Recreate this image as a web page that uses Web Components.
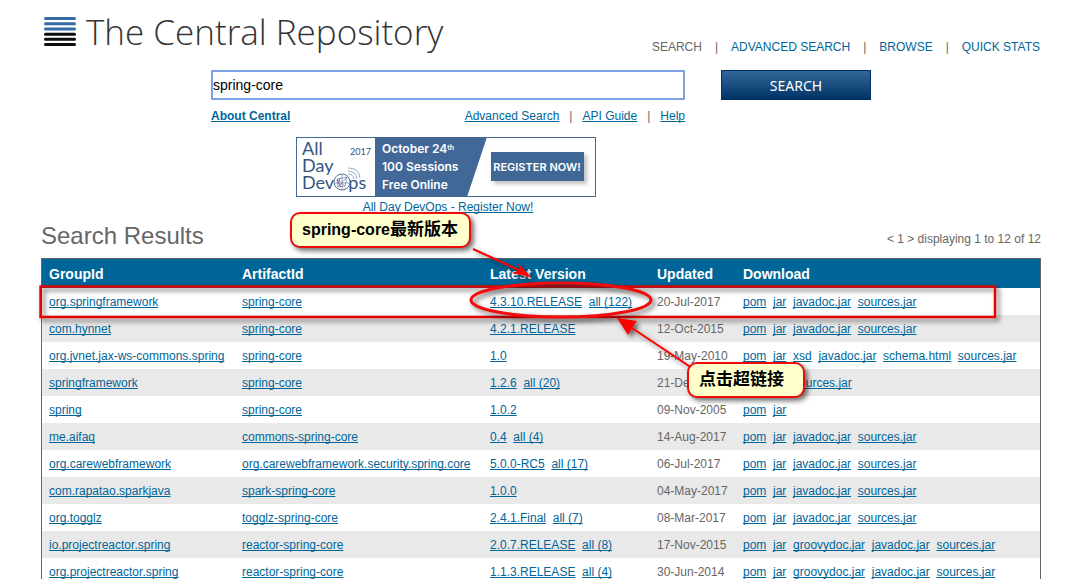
<!DOCTYPE html>
<html lang="en">
<head>
<meta charset="utf-8">
<title>The Central Repository Search</title>
<style>
html{scrollbar-width:none}
body{margin:0;background:#fff;color:#666;font:12px/16px "Liberation Sans",Arial,sans-serif;--link:#006699;--mark:#f00a0a}
</style>
</head>
<body>
<central-page>
  <site-header></site-header>
  <search-panel></search-panel>
  <search-results></search-results>
  <page-marks slot="marks"></page-marks>
  <callout-note slot="marks" style="left:290px;top:212px;width:181px">spring-core<span lang="zh">最新版本</span></callout-note>
  <callout-note slot="marks" style="left:687px;top:362px;width:118px"><span lang="zh">点击超链接</span></callout-note>
</central-page>
<script>
const define = (name, html, setup) => {
  const template = document.createElement('template');
  template.innerHTML = html;
  customElements.define(name, class extends HTMLElement {
    constructor() {
      super();
      const root = this.attachShadow({ mode: 'open' });
      root.append(template.content.cloneNode(true));
      if (setup) setup(root);
    }
  });
};
const linkCss = 'a{color:var(--link);text-decoration:underline;text-decoration-skip-ink:none;text-underline-offset:1px}';

define('central-page', `<style>
:host{display:block;position:relative}
main{padding:0 31px 0 41px}
</style><main><slot></slot></main><slot name="marks"></slot>`);

define('site-logo', `<style>
:host{display:block}
a{display:flex;align-items:center;gap:10px;color:#333;text-decoration:none}
svg{display:block}
span{font:300 35px/48px "Open Sans",Lato,sans-serif;white-space:nowrap}
</style><a href="#"><svg width="32" height="32" viewBox="0 0 32 32" aria-hidden="true">
<g stroke-width="3" stroke-linecap="round"><path stroke="#336ca5" d="M1.5 2.5h29M1.5 7.7h29M1.5 13h29"/><path stroke="#0b0f0f" d="M1.5 18.2h29M1.5 23.2h29M1.5 28.4h29"/></g></svg><span>The Central Repository</span></a>`);

define('site-header', `<style>
:host{display:flex;justify-content:space-between;align-items:flex-start;height:70px}
site-logo{margin:8px 0 0 3px}
nav{display:flex;gap:13px;margin:39px 1px 0 0;white-space:nowrap}
a{color:var(--link);text-decoration:none}
a[aria-current]{color:#666}
</style><site-logo></site-logo>
<nav><a href="#" aria-current="page">SEARCH</a><span>|</span><a href="#">ADVANCED SEARCH</a><span>|</span><a href="#">BROWSE</a><span>|</span><a href="#">QUICK STATS</a></nav>`);

define('event-banner', `<style>
:host{display:block;text-align:center}
a{display:block}
svg{display:block;margin:0 0 2px 85px}
${linkCss}
</style><a href="#"><svg width="300" height="60" viewBox="0 0 300 60">
<defs><filter id="s" x="-20%" y="-20%" width="140%" height="160%"><feDropShadow dx="3" dy="3" stdDeviation="2" flood-color="#000" flood-opacity=".25"/></filter></defs>
<rect x=".5" y=".5" width="299" height="59" fill="#fff" stroke="#416897"/>
<path d="M79 0H191L171 60H79z" fill="#416897"/>
<g font-family="Lato,sans-serif" fill="#35557f" font-size="18"><text x="6" y="18">All</text><text x="6" y="35">Day</text><text x="6" y="52">DevOps</text><text x="54" y="18" font-size="9">2017</text></g>
<circle cx="46" cy="45" r="8" fill="#fff" stroke="#53739b"/>
<g fill="none" stroke="#7890b0" stroke-width=".8"><path d="M41 42l10-2-2 9-7 1zM41 42l8 7M51 40l-9 10M46 38v14M39 46h14M52 37q5 0 6 5M52 34q8 0 9 8M52 31q11 0 12 10"/></g><path d="M41 43l4 7M44 41l-2 6" stroke="#a35aa6"/>
<g font-family="Inter,sans-serif" font-weight="600" font-size="12" fill="#fff"><text x="86" y="16">October 24<tspan font-size="7" dy="-3">th</tspan></text><text x="86" y="34">100 Sessions</text><text x="86" y="52">Free Online</text></g>
<rect x="195" y="15" width="93" height="29" fill="#416897" filter="url(#s)"/>
<text x="241" y="34" text-anchor="middle" font-family="Inter,sans-serif" font-weight="600" font-size="11" fill="#fff">REGISTER NOW!</text>
</svg></a><a href="#">All Day DevOps - Register Now!</a>`);

define('search-panel', `<style>
:host{display:block;padding-left:170px}
form{display:grid;grid-template-columns:474px 150px;column-gap:36px}
input{box-sizing:border-box;width:100%;height:30px;border:2px solid #7da2e3;border-radius:1px;outline:0;padding:0;font:14px "Liberation Sans",Arial,sans-serif;color:#000;background:#fff}
button{height:30px;border:1px solid #002f63;background:linear-gradient(#336699,#003366);color:#fff;font:14px "Noto Sans",sans-serif;padding:0;cursor:pointer}
.sub{display:flex;justify-content:space-between;width:474px;margin-top:8px}
.links{display:flex;gap:10px}
.about{font-weight:bold}
event-banner{width:474px;margin-top:13px}
${linkCss}
</style><form><input type="text" value="spring-core" aria-label="Search"><button type="button">SEARCH</button></form>
<div class="sub"><a class="about" href="#">About Central</a><div class="links"><a href="#">Advanced Search</a><span>|</span><a href="#">API Guide</a><span>|</span><a href="#">Help</a></div></div>
<event-banner></event-banner>`);

const results = [
  ['org.springframework','spring-core','4.3.10.RELEASE','all (122)','20-Jul-2017','pom jar javadoc.jar sources.jar'],
  ['com.hynnet','spring-core','4.2.1.RELEASE','','12-Oct-2015','pom jar javadoc.jar sources.jar'],
  ['org.jvnet.jax-ws-commons.spring','spring-core','1.0','','19-May-2010','pom jar xsd javadoc.jar schema.html sources.jar'],
  ['springframework','spring-core','1.2.6','all (20)','21-Dec-2005','pom jar sources.jar'],
  ['spring','spring-core','1.0.2','','09-Nov-2005','pom jar'],
  ['me.aifaq','commons-spring-core','0.4','all (4)','14-Aug-2017','pom jar javadoc.jar sources.jar'],
  ['org.carewebframework','org.carewebframework.security.spring.core','5.0.0-RC5','all (17)','06-Jul-2017','pom jar javadoc.jar sources.jar'],
  ['com.rapatao.sparkjava','spark-spring-core','1.0.0','','04-May-2017','pom jar javadoc.jar sources.jar'],
  ['org.togglz','togglz-spring-core','2.4.1.Final','all (7)','08-Mar-2017','pom jar javadoc.jar sources.jar'],
  ['io.projectreactor.spring','reactor-spring-core','2.0.7.RELEASE','all (8)','17-Nov-2015','pom jar groovydoc.jar javadoc.jar sources.jar'],
  ['org.projectreactor.spring','reactor-spring-core','1.1.3.RELEASE','all (4)','30-Jun-2014','pom jar groovydoc.jar javadoc.jar sources.jar']
];
define('search-results', `<style>
:host{display:block}
header{display:flex;justify-content:space-between;align-items:flex-start;height:43px;padding-top:3px;box-sizing:border-box}
h1{margin:0;font:24px/36px "Liberation Sans",Arial,sans-serif}
p{margin:13px 0 0}
table{width:100%;table-layout:fixed;border-collapse:separate;border-spacing:0;border:1px solid #666;box-sizing:border-box}
th,td{box-sizing:border-box;padding:0 7px}
th{background:#006699;color:#fff;font-size:14px;text-align:left;height:29px}
td{height:27px;white-space:nowrap}
tbody tr:nth-child(even){background:#e9e9e9}
.g{width:193px}.a{width:248px}.v{width:167px}.u{width:86px}
${linkCss}
</style><header><h1>Search Results</h1><p>&lt; 1 &gt; displaying 1 to 12 of 12</p></header>
<table><colgroup><col class="g"><col class="a"><col class="v"><col class="u"><col></colgroup>
<thead><tr><th>GroupId</th><th>ArtifactId</th><th>Latest Version</th><th>Updated</th><th>Download</th></tr></thead><tbody></tbody></table>`, root => {
  const links = items => items.filter(Boolean).map(text => `<a href="#">${text}</a>`).join('&nbsp; ');
  root.querySelector('tbody').innerHTML = results.map(([group, artifact, version, all, date, files]) =>
    `<tr><td>${links([group])}</td><td>${links([artifact])}</td><td>${links([version, all])}</td><td>${date}</td><td>${links(files.split(' '))}</td></tr>`).join('');
});

define('callout-note', `<style>
:host{position:absolute;box-sizing:border-box;height:36px;padding:0 10px;border:2px solid var(--mark);border-radius:10px;background:#ffffcc;box-shadow:3px 3px 5px rgba(0,0,0,.55);color:#000;font:bold 16px/32px "Liberation Sans","Noto Sans CJK SC",sans-serif;white-space:nowrap}
::slotted(span){font-size:17px}
</style><slot></slot>`);

define('page-marks', `<style>
:host{position:absolute;inset:0 auto auto 0;pointer-events:none}
svg{display:block}
</style><svg width="1010" height="400" viewBox="0 0 1010 400" aria-hidden="true">
<defs><filter id="d" filterUnits="userSpaceOnUse" x="0" y="200" width="1010" height="200"><feDropShadow dx="3" dy="3" stdDeviation="2.5" flood-color="#000" flood-opacity=".6"/></filter></defs>
<rect x="40.5" y="286.5" width="954.5" height="30.5" fill="none" stroke="#e60000" stroke-width="2.4" filter="url(#d)"/>
<ellipse cx="561" cy="300" rx="90" ry="17" fill="none" stroke="#f00a0a" stroke-width="3" filter="url(#d)"/>
<g fill="#f00" stroke="#f00" filter="url(#d)"><path d="M473 249L521 271M692 368L632 328" stroke-width="2" fill="none"/><path d="M531 277L518 263 520 270 512 273zM617 318L637 321 632 328 628 335z" stroke="none"/></g>
</svg>`);
</script>
</body>
</html>
